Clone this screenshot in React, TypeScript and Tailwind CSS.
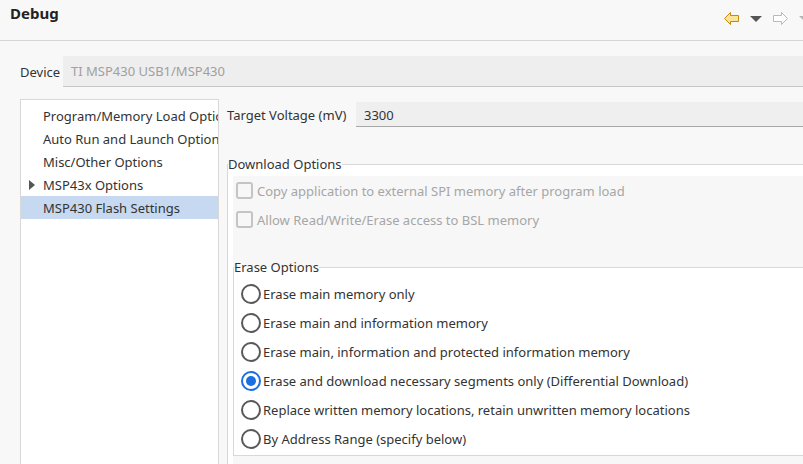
import { FC } from 'react'
import clsx from 'clsx'

const treeItems = [
  { title: 'Program/Memory Load Options' },
  { title: 'Auto Run and Launch Options' },
  { title: 'Misc/Other Options' },
  { title: 'MSP43x Options', expandable: true },
  { title: 'MSP430 Flash Settings', selected: true }
]

const eraseOptions = [
  'Erase main memory only',
  'Erase main and information memory',
  'Erase main, information and protected information memory',
  'Erase and download necessary segments only (Differential Download)',
  'Replace written memory locations, retain unwritten memory locations',
  'By Address Range (specify below)'
]

const Arrow: FC<{ back?: boolean }> = ({ back }) => (
  <svg width="15" height="13" viewBox="0 0 15 13" className={clsx(!back && '-scale-x-100')}>
    <polygon
      points="0.5,6.5 6.5,0.5 6.5,3.5 14.5,3.5 14.5,9.5 6.5,9.5 6.5,12.5"
      fill={back ? '#fbe39a' : '#ffffff'}
      stroke={back ? '#c48a0c' : '#b9b9b9'}
    />
  </svg>
)

const Caret: FC<{ muted?: boolean }> = ({ muted }) => (
  <svg width="12" height="6" viewBox="0 0 12 6">
    <polygon points="0,0 12,0 6,6" fill={muted ? '#b5b5b5' : '#555555'} />
  </svg>
)

const Radio: FC<{ checked?: boolean }> = ({ checked }) => (
  <div
    className={clsx(
      'w-[20px] h-[20px] rounded-full border-2 bg-white flex items-center justify-center shrink-0',
      checked ? 'border-[#1b6fe0]' : 'border-[#595959]'
    )}
  >
    {checked && <div className="w-[10px] h-[10px] rounded-full bg-[#1b6fe0]" />}
  </div>
)

export default function App() {
  return (
    <div className="w-[803px] h-[464px] overflow-hidden bg-[#f8f8f8] text-[13px] text-[#333] font-['Noto_Sans',sans-serif]">
      <div className="h-[41px] border-b border-[#d6d6d6] flex items-start justify-between pl-[10px]">
        <div className="pt-[3px] leading-[20px] text-[15px] font-bold text-[#222]">Debug</div>
        <div className="mt-[12px] -mr-[8px] flex items-center gap-[11px]">
          <Arrow back />
          <Caret />
          <Arrow />
          <Caret muted />
        </div>
      </div>

      <div className="pt-[15px] pl-[20px] flex items-center">
        <div className="w-[43px] pt-[2px]">Device</div>
        <div className="flex-1 h-[31px] bg-[#eeeeee] border-b border-[#c6c6c6] pl-[8px] pt-[2px] flex items-center text-[#a0a0a0]">
          TI MSP430 USB1/MSP430
        </div>
      </div>

      <div className="mt-[12px] pl-[20px] flex gap-[8px]">
        <div className="w-[199px] h-[400px] shrink-0 bg-white border border-[#d8d8d8] pt-[4px] overflow-hidden">
          {treeItems.map(item => (
            <div
              key={item.title}
              className={clsx(
                'h-[23px] flex items-center pl-[8px] whitespace-nowrap',
                item.selected && 'bg-[#c6d9f0]'
              )}
            >
              <div className="w-[14px] shrink-0 flex items-center">
                {item.expandable && (
                  <svg width="6" height="10" viewBox="0 0 6 10">
                    <polygon points="0,0 6,5 0,10" fill="#555" />
                  </svg>
                )}
              </div>
              <span className="pt-[3px]">{item.title}</span>
            </div>
          ))}
        </div>

        <div className="flex-1 min-w-0">
          <div className="mt-[3px] flex items-center">
            <div className="w-[129px] shrink-0 pt-[3px]">Target Voltage (mV)</div>
            <div className="flex-1 h-[25px] bg-[#efefef] border-b border-[#a8a8a8] pl-[8px] pt-[3px] flex items-center">
              3300
            </div>
          </div>

          <fieldset className="mt-[28px] border-t border-l border-[#d8d8d8] bg-white">
            <legend className="leading-[18px]">Download Options</legend>
            <div className="mt-[3px] ml-[5px] bg-[#f7f7f7] pb-[20px]">
              {['Copy application to external SPI memory after program load', 'Allow Read/Write/Erase access to BSL memory'].map(
                label => (
                  <div key={label} className="h-[29px] flex items-center text-[#a6a6a6]">
                    <div className="ml-[3px] w-[17px] h-[17px] border-2 border-[#c4c4c4] rounded-[3px] shrink-0" />
                    <span className="ml-[4px] pt-[2px]">{label}</span>
                  </div>
                )
              )}

              <fieldset className="mt-[24px] border-t border-l border-b border-[#d8d8d8] bg-white pt-[3px] pb-[2px]">
                <legend className="leading-[18px]">Erase Options</legend>
                {eraseOptions.map((label, i) => (
                  <div key={label} className="h-[29px] flex items-center pl-[7px] whitespace-nowrap">
                    <Radio checked={i === 3} />
                    <span className="ml-[2px] pt-[2px]">{label}</span>
                  </div>
                ))}
              </fieldset>
            </div>
          </fieldset>
        </div>
      </div>
    </div>
  )
}
